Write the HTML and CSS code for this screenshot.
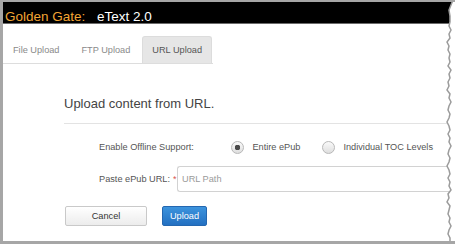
FILE: index.html
```html
<!DOCTYPE html>
<html lang="en">
<head>
  <meta charset="UTF-8">
  <meta name="viewport" content="width=device-width, initial-scale=1.0">
  <title>Golden Gate: eText 2.0</title>
  <link rel="stylesheet" href="styles.css">
</head>
<body>
  <div class="shot">
    <header class="topbar">
      <span class="brand">Golden Gate:</span>
      <span class="product">eText 2.0</span>
    </header>

    <ul class="tabs">
      <li>File Upload</li>
      <li>FTP Upload</li>
      <li class="active">URL Upload</li>
    </ul>

    <section class="panel">
      <h2>Upload content from URL.</h2>
      <form class="upload-form">
        <div class="row">
          <label class="label label-offline">Enable Offline Support:</label>
          <div class="radios">
            <label class="option"><input type="radio" name="offline" class="radio" checked> Entire ePub</label>
            <label class="option"><input type="radio" name="offline" class="radio"> Individual TOC Levels</label>
          </div>
        </div>
        <div class="row">
          <label class="label label-url" for="url">Paste ePub URL:<span class="req">*</span></label>
          <input type="text" id="url" class="url-input" placeholder="URL Path">
        </div>
        <div class="actions">
          <button type="button" class="btn">Cancel</button>
          <button type="button" class="btn btn-primary">Upload</button>
        </div>
      </form>
    </section>

    <svg class="torn" width="11" height="244" viewBox="0 0 11 244">
      <polygon fill="#fff" points="11,0 9,0 7,5 5,10 6,16 6,22 5,26 7,30 5,34 6,38 3,42 5,46 4,50 6,54 5,58 6,62 4,66 7,70 5,74 6,78 4,82 5,86 3,90 6,94 5,98 7,102 5,106 4,110 6,114 5,118 3,122 5,126 6,130 4,134 6,138 5,142 7,146 5,150 4,154 6,158 5,162 3,166 5,170 6,174 4,178 6,182 5,186 7,190 4,194 5,198 3,202 6,206 5,210 4,214 6,218 5,222 7,226 5,230 4,234 6,238 6,244 11,244"/>
      <polyline fill="none" stroke="#9c9c9c" stroke-width="1.5" points="9,0 7,5 5,10 6,16 6,22 5,26 7,30 5,34 6,38 3,42 5,46 4,50 6,54 5,58 6,62 4,66 7,70 5,74 6,78 4,82 5,86 3,90 6,94 5,98 7,102 5,106 4,110 6,114 5,118 3,122 5,126 6,130 4,134 6,138 5,142 7,146 5,150 4,154 6,158 5,162 3,166 5,170 6,174 4,178 6,182 5,186 7,190 4,194 5,198 3,202 6,206 5,210 4,214 6,218 5,222 7,226 5,230 4,234 6,238 6,244"/>
    </svg>
  </div>
</body>
</html>
```

FILE: styles.css
```css
html, body {
  margin: 0;
  padding: 0;
  background: #fff;
}
body {
  width: 455px;
  height: 244px;
  overflow: hidden;
  font-family: 'Liberation Sans', Arial, sans-serif;
  color: #555;
}
.shot {
  position: relative;
  height: 244px;
  box-sizing: border-box;
  border-top: 2px solid #a6a6a6;
  border-left: 3px solid #a6a6a6;
  border-bottom: 3px solid #a6a6a6;
  overflow: hidden;
}
.topbar {
  height: 22px;
  box-sizing: border-box;
  padding: 7px 0 0 2px;
  background: #000;
  border-bottom: 1px solid #6b6b6b;
  font-size: 13.5px;
  line-height: 16px;
  white-space: nowrap;
}
.brand {
  color: #f2a534;
}
.product {
  color: #fff;
  margin-left: 8px;
}
.tabs {
  display: inline-flex;
  list-style: none;
  margin: 12px 0 0;
  padding: 0 1px 0 0;
  border-bottom: 1px solid #ddd;
}
.tabs li {
  margin-right: 2px;
  padding: 7px 9px;
  font-size: 9.2px;
  line-height: 12px;
  color: #8a8a8a;
  border: 1px solid transparent;
  border-bottom: none;
  border-radius: 3px 3px 0 0;
}
.tabs li:last-child {
  margin-right: 0;
}
.tabs li.active {
  background: #e6e6e6;
  border-color: #dcdcdc;
  color: #555;
}
.panel {
  padding-left: 61px;
}
h2 {
  margin: 32px 0 0;
  font-size: 13px;
  line-height: 16px;
  font-weight: normal;
  color: #444;
}
.upload-form {
  margin-top: 11px;
  border-top: 1px solid #e3e3e3;
  padding-left: 35px;
}
.row {
  display: flex;
  align-items: center;
}
.row:first-child {
  margin-top: 16px;
  height: 14px;
}
.row + .row {
  margin-top: 12px;
}
.label {
  font-size: 9.2px;
  color: #555;
  white-space: nowrap;
}
.label-offline {
  width: 136px;
}
.label-url {
  width: 78px;
}
.req {
  color: #d9534f;
  margin-left: 3px;
  vertical-align: top;
  font-size: 9px;
}
.radios {
  display: flex;
  align-items: center;
}
.option {
  display: flex;
  align-items: center;
  font-size: 9.2px;
  color: #555;
  margin-right: 22px;
  white-space: nowrap;
}
.radio {
  appearance: none;
  -webkit-appearance: none;
  width: 13px;
  height: 13px;
  margin: 0 8px 0 0;
  border: 1px solid #b8b8b8;
  border-radius: 50%;
  background: linear-gradient(#fafafa, #dedede);
  box-sizing: border-box;
}
.radio:checked {
  background: radial-gradient(circle, #4a4a4a 0 2.6px, transparent 3px), linear-gradient(#fafafa, #dedede);
}
.url-input {
  flex: 1;
  height: 26px;
  box-sizing: border-box;
  padding: 0 4px;
  border: 1px solid #d2d2d2;
  border-right: none;
  border-radius: 3px 0 0 3px;
  font-family: inherit;
  font-size: 9.2px;
  color: #555;
}
.url-input::placeholder {
  color: #9a9a9a;
}
.actions {
  display: flex;
  margin: 14px 0 0 -34px;
}
.btn {
  height: 20px;
  padding: 0;
  border: 1px solid #c9c9c9;
  border-radius: 2px;
  background: linear-gradient(#fff, #ececec);
  font-family: inherit;
  font-size: 9.2px;
  color: #333;
  width: 82px;
}
.btn-primary {
  width: 45px;
  margin-left: 15px;
  border-color: #2467b0;
  background: linear-gradient(#3c93dd, #2370c2);
  color: #fff;
}
.torn {
  position: absolute;
  top: -2px;
  left: 441px;
}
```
